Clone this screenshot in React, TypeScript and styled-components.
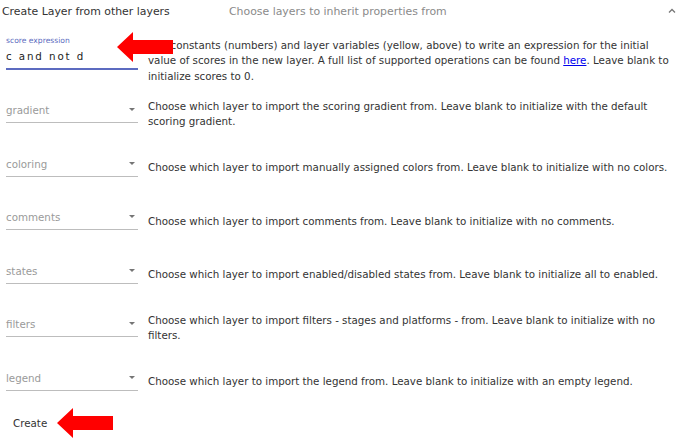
import styled, { createGlobalStyle } from "styled-components";

const GlobalStyle = createGlobalStyle`
  body {
    margin: 0;
    background: #ffffff;
    font-family: "DejaVu Sans", sans-serif;
  }
`;

const Page = styled.div`
  position: relative;
  width: 683px;
  height: 443px;
  overflow: hidden;
  background: #fff;
`;

const Header = styled.div`
  display: flex;
  align-items: center;
  height: 22px;
  padding: 0 6px 0 2px;
  font-size: 10.9px;
`;

const Title = styled.div`
  width: 227px;
  color: #333;
`;

const Subtitle = styled.div`
  flex: 1;
  color: #8a8a8a;
`;

const Chevron = styled.svg`
  width: 10px;
  height: 10px;
`;

const Body = styled.div`
  padding: 12px 0 0 6px;
`;

const Row = styled.div`
  display: flex;
  align-items: center;
  gap: 10px;
  height: 53.5px;
`;

const Field = styled.div<{ $active?: boolean }>`
  position: relative;
  flex: 0 0 132px;
  height: 18px;
  box-sizing: border-box;
  border-bottom: ${(p) => (p.$active ? "2px solid #5c6bc0" : "1px solid #bdbdbd")};
  display: flex;
  align-items: flex-start;
  justify-content: space-between;
`;

const Placeholder = styled.span`
  font-size: 10.3px;
  line-height: 10px;
  color: #9a9a9a;
`;

const Caret = styled.span`
  margin: 3px 3px 0 0;
  width: 0;
  height: 0;
  border-left: 3.5px solid transparent;
  border-right: 3.5px solid transparent;
  border-top: 3.5px solid #757575;
`;

const FloatLabel = styled.span`
  position: absolute;
  left: 0;
  top: -16px;
  font-size: 7.6px;
  color: #5c6bc0;
`;

const Value = styled.span`
  font-size: 10.3px;
  line-height: 18px;
  letter-spacing: 1.9px;
  color: #222;
  margin-top: -5px;
`;

const Description = styled.div`
  flex: 1;
  font-size: 10.3px;
  line-height: 15.5px;
  color: #333;
  padding-right: 8px;
`;

const Link = styled.a`
  color: #0000ee;
  text-decoration: underline;
`;

const CreateButton = styled.button`
  margin-top: 1px;
  height: 26px;
  padding: 0 7px;
  border: none;
  background: transparent;
  font-family: "DejaVu Sans", sans-serif;
  font-size: 10.3px;
  color: #333;
`;

const Arrow = styled.svg<{ $x: number; $y: number }>`
  position: absolute;
  left: ${(p) => p.$x}px;
  top: ${(p) => p.$y}px;
`;

const RedArrow = ({ x, y }: { x: number; y: number }) => (
  <Arrow $x={x} $y={y} width="56" height="32" viewBox="0 0 56 32">
    <polygon points="0,16 16,1 16,9 56,9 56,23 16,23 16,31" fill="#ff0000" />
  </Arrow>
);

const selects = [
  {
    name: "gradient",
    text: "Choose which layer to import the scoring gradient from. Leave blank to initialize with the default scoring gradient.",
  },
  {
    name: "coloring",
    text: "Choose which layer to import manually assigned colors from. Leave blank to initialize with no colors.",
  },
  {
    name: "comments",
    text: "Choose which layer to import comments from. Leave blank to initialize with no comments.",
  },
  {
    name: "states",
    text: "Choose which layer to import enabled/disabled states from. Leave blank to initialize all to enabled.",
  },
  {
    name: "filters",
    text: "Choose which layer to import filters - stages and platforms - from. Leave blank to initialize with no filters.",
  },
  {
    name: "legend",
    text: "Choose which layer to import the legend from. Leave blank to initialize with an empty legend.",
  },
];

const App = () => {
  return (
    <>
      <GlobalStyle />
      <Page>
        <Header>
          <Title>Create Layer from other layers</Title>
          <Subtitle>Choose layers to inherit properties from</Subtitle>
          <Chevron viewBox="0 0 10 10">
            <polyline points="2,6.5 5,3.5 8,6.5" fill="none" stroke="#777" strokeWidth="1.3" />
          </Chevron>
        </Header>
        <Body>
          <Row>
            <Field $active>
              <FloatLabel>score expression</FloatLabel>
              <Value>c and not d</Value>
            </Field>
            <Description>
              Use constants (numbers) and layer variables (yellow, above) to write an expression for the initial
              value of scores in the new layer. A full list of supported operations can be found{" "}
              <Link href="#">here</Link>. Leave blank to initialize scores to 0.
            </Description>
          </Row>
          {selects.map((s) => (
            <Row key={s.name}>
              <Field>
                <Placeholder>{s.name}</Placeholder>
                <Caret />
              </Field>
              <Description>{s.text}</Description>
            </Row>
          ))}
          <CreateButton>Create</CreateButton>
        </Body>
        <RedArrow x={117} y={31} />
        <RedArrow x={57} y={407} />
      </Page>
    </>
  );
};

export default App;
